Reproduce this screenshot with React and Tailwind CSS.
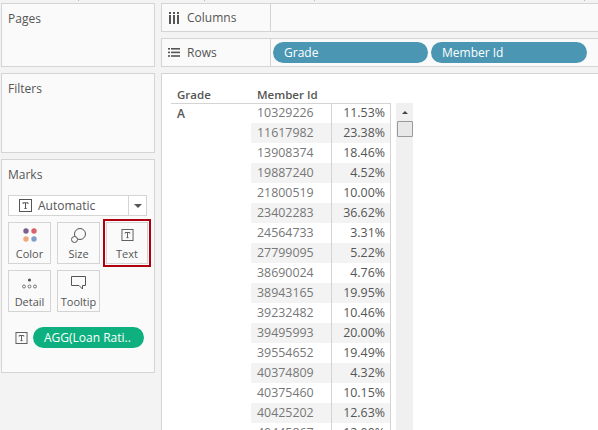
import React from "react";

const rows = [
  ["10329226", "11.53%"], ["11617982", "23.38%"], ["13908374", "18.46%"], ["19887240", "4.52%"],
  ["21800519", "10.00%"], ["23402283", "36.62%"], ["24564733", "3.31%"], ["27799095", "5.22%"],
  ["38690024", "4.76%"], ["38943165", "19.95%"], ["39232482", "10.46%"], ["39495993", "20.00%"],
  ["39554652", "19.49%"], ["40374809", "4.32%"], ["40375460", "10.15%"], ["40425202", "12.63%"],
  ["40445867", "12.00%"],
];

const TIcon = ({ className }) => (
  <svg viewBox="0 0 13 13" className={className} fill="none" stroke="#555">
    <rect x="0.5" y="0.5" width="12" height="12" />
    <path d="M4 5V3.8H9V5M6.5 3.8V9.4M5.3 9.4H7.7" />
  </svg>
);

const MarkButton = ({ label, children }) => (
  <div className="w-[43px] h-[42px] border border-[#d4d4d4] flex flex-col items-center justify-end pb-[2px]">
    <div className="h-[18px] mb-[2px] flex items-center justify-center">{children}</div>
    <span className="text-[11px] leading-[15px] text-[#555]">{label}</span>
  </div>
);

const App = () => {
  return (
    <div className="relative w-[598px] h-[430px] overflow-hidden bg-[#f3f3f3] flex gap-[6px] pl-px pt-[3px] text-[#555] font-['Open_Sans',sans-serif] text-[12px]">
      {/* little splitter ticks along the top edge */}
      <div className="absolute top-0 left-[78px] w-px h-px bg-[#bbb]" />
      <div className="absolute top-0 left-[204px] w-px h-px bg-[#bbb]" />
      <div className="absolute top-0 left-[314px] w-px h-px bg-[#bbb]" />
      <div className="absolute top-0 left-[584px] w-px h-px bg-[#bbb]" />

      <div className="w-[154px] shrink-0 flex flex-col gap-[6px]">
        <div className="h-[64px] shrink-0 bg-[#fafafa] border border-[#d4d4d4] pl-[6px] pt-[6px]">Pages</div>
        <div className="h-[80px] shrink-0 bg-[#fafafa] border border-[#d4d4d4] pl-[6px] pt-[6px]">Filters</div>
        <div className="h-[214px] shrink-0 bg-[#fafafa] border border-[#d4d4d4] pl-[6px] pt-[6px]">
          <div>Marks</div>
          <div className="mt-[11px] w-[139px] h-[21px] border border-[#d4d4d4] bg-white flex items-center">
            <TIcon className="w-[13px] h-[13px] ml-[10px]" />
            <span className="ml-[6px] flex-1 leading-none">Automatic</span>
            <div className="w-[18px] h-full border-l border-[#d4d4d4] flex items-center justify-center">
              <div className="w-0 h-0 border-x-[4px] border-x-transparent border-t-[4px] border-t-[#555]" />
            </div>
          </div>
          <div className="mt-[6px] h-[42px] flex gap-[6px]">
            <MarkButton label="Color">
              <svg viewBox="0 0 14 14" className="w-[14px] h-[14px]">
                <circle cx="3" cy="3" r="2.7" fill="#7b5f8f" />
                <circle cx="11" cy="3" r="2.7" fill="#d9626b" />
                <circle cx="3" cy="11" r="2.7" fill="#efa77c" />
                <circle cx="11" cy="11" r="2.7" fill="#7f9fc9" />
              </svg>
            </MarkButton>
            <MarkButton label="Size">
              <svg viewBox="0 0 15 15" className="w-[15px] h-[15px]" fill="none" stroke="#555">
                <circle cx="9" cy="6" r="5.5" />
                <circle cx="3.5" cy="11.5" r="3" fill="#fafafa" />
              </svg>
            </MarkButton>
            <div className="w-[48px] h-[48px] shrink-0 -mt-[3px] -ml-[3px] border-2 border-[#b0000f] p-px">
              <div className="w-full h-full border border-[#d4d4d4] flex flex-col items-center justify-end pb-[2px]">
                <div className="h-[18px] mb-[2px] flex items-center">
                  <TIcon className="w-[13px] h-[12px]" />
                </div>
                <span className="text-[11px] leading-[15px] text-[#555]">Text</span>
              </div>
            </div>
          </div>
          <div className="mt-[6px] flex gap-[6px]">
            <MarkButton label="Detail">
              <svg viewBox="0 0 15 11" className="w-[15px] h-[11px]" fill="none" stroke="#555" strokeWidth="0.8">
                <circle cx="7.5" cy="2" r="1.6" fill="#555" stroke="none" />
                <circle cx="2" cy="8.5" r="1.5" />
                <circle cx="7.5" cy="8.5" r="1.5" />
                <circle cx="13" cy="8.5" r="1.5" />
              </svg>
            </MarkButton>
            <MarkButton label="Tooltip">
              <svg viewBox="0 0 15 14" className="w-[15px] h-[14px]" fill="none" stroke="#555">
                <path d="M0.5 0.5H14.5V9.5H11.5V13L8 9.5H0.5Z" />
              </svg>
            </MarkButton>
          </div>
          <div className="mt-[15px] flex items-center">
            <TIcon className="w-[13px] h-[12px] ml-[7px]" />
            <div className="ml-[5px] w-[111px] h-[21px] rounded-full bg-[#0eb07f] text-white flex items-center pl-[11px] leading-none whitespace-nowrap">
              AGG(Loan Rati..
            </div>
          </div>
        </div>
      </div>

      <div className="flex-1 flex flex-col gap-[6px] min-w-0">
        <div className="h-[29px] shrink-0 bg-[#fafafa] border border-[#d4d4d4] border-r-0 flex">
          <div className="w-[109px] border-r border-[#d4d4d4] flex items-center pl-[7px]">
            <svg viewBox="0 0 10 12" className="w-[10px] h-[12px]" fill="#555">
              <rect x="0" y="0" width="2" height="2" />
              <rect x="4" y="0" width="2" height="2" />
              <rect x="8" y="0" width="2" height="2" />
              <rect x="0" y="3" width="2" height="9" />
              <rect x="4" y="3" width="2" height="9" />
              <rect x="8" y="3" width="2" height="9" />
            </svg>
            <span className="ml-[8px]">Columns</span>
          </div>
        </div>
        <div className="h-[29px] shrink-0 bg-[#fafafa] border border-[#d4d4d4] border-r-0 flex">
          <div className="w-[109px] border-r border-[#d4d4d4] flex items-center pl-[6px]">
            <svg viewBox="0 0 12 9" className="w-[12px] h-[9px]" fill="#555">
              <rect x="0" y="0" width="2" height="1.6" />
              <rect x="3" y="0" width="9" height="1.6" />
              <rect x="0" y="3.6" width="2" height="1.6" />
              <rect x="3" y="3.6" width="9" height="1.6" />
              <rect x="0" y="7.2" width="2" height="1.6" />
              <rect x="3" y="7.2" width="9" height="1.6" />
            </svg>
            <span className="ml-[7px]">Rows</span>
          </div>
          <div className="flex items-center gap-[3px] pl-[2px]">
            <div className="w-[155px] h-[21px] rounded-full bg-[#4a96b3] text-white flex items-center pl-[11px] leading-none">Grade</div>
            <div className="w-[156px] h-[21px] rounded-full bg-[#4a96b3] text-white flex items-center pl-[11px] leading-none">Member Id</div>
          </div>
        </div>
        <div className="flex-1 min-h-0 bg-white border border-[#d4d4d4] border-r-0 border-b-0 pl-[9px] pt-[13px]">
          <div className="flex h-[17px] w-[220px] items-center font-semibold text-[11.5px] text-[#555] border-b border-[#d4d4d4] leading-none">
            <span className="w-[80px] pl-[6px]">Grade</span>
            <span className="pl-[6px]">Member Id</span>
          </div>
          <div className="flex -mt-px">
            <div className="w-[80px] pl-[6px] pt-[2px] font-semibold text-[#555] leading-[18px]">A</div>
            <div className="w-[140px]">
              {rows.map(([id, pct], i) => (
                <div key={id} className={"flex h-[20px] items-center leading-none text-[12.4px] " + (i % 2 ? "bg-[#f3f3f3]" : "")}>
                  <span className="w-[80px] pl-[6px] text-[#777]">{id}</span>
                  <span className="w-[60px] h-full flex items-center justify-end pr-[5px] border-x border-[#d4d4d4] text-[#555]">{pct}</span>
                </div>
              ))}
            </div>
            <div className="ml-[5px] w-[17px] h-[340px] bg-[#f0f0f0] flex flex-col items-center">
              <div className="h-[18px] flex items-center">
                <div className="w-0 h-0 border-x-[3px] border-x-transparent border-b-[3px] border-b-[#444]" />
              </div>
              <div className="w-[16px] h-[16px] border border-[#999] bg-[#e8e8e8] rounded-[1px]" />
            </div>
          </div>
        </div>
      </div>
    </div>
  );
};

export default App;
